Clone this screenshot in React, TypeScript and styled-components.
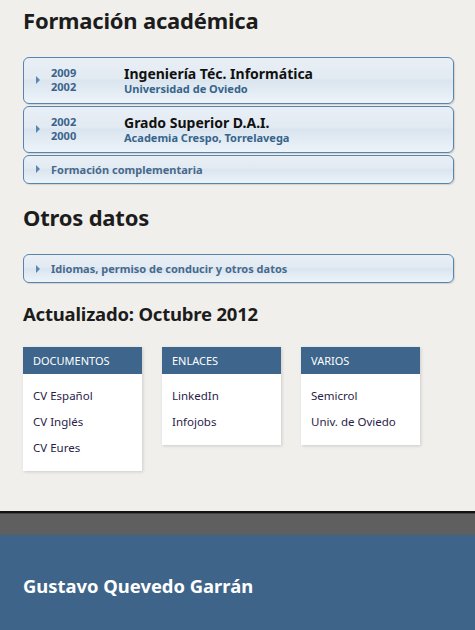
import React from 'react';
import styled, { createGlobalStyle } from 'styled-components';

const GlobalStyle = createGlobalStyle`
  html, body {
    margin: 0;
    padding: 0;
    background: #f0efeb;
    font-family: "Noto Sans", "Open Sans", "DejaVu Sans", sans-serif;
  }
`;

const Page = styled.div`
  display: flex;
  flex-direction: column;
  min-height: 630px;
`;

const Main = styled.main`
  padding: 6px 21px 20px 23px;
  flex: 1;
`;

const Heading = styled.h2<{ $size: number; $mt: number; $mb: number }>`
  margin: ${(p) => p.$mt}px 0 ${(p) => p.$mb}px;
  font-size: ${(p) => p.$size}px;
  font-weight: 700;
  color: #1c1c1c;
  line-height: 1.3;
  letter-spacing: -0.2px;
`;

const List = styled.div`
  display: flex;
  flex-direction: column;
  gap: 2px;
`;

const Item = styled.div<{ $tall?: boolean }>`
  display: flex;
  align-items: center;
  box-sizing: border-box;
  height: ${(p) => (p.$tall ? 47 : 29)}px;
  border: 1px solid #5785b0;
  border-radius: 6px;
  background: linear-gradient(
    to bottom,
    #e9eff5 0%,
    #e2eaf2 45%,
    #dae5ef 50%,
    #edf3f9 100%
  );
  box-shadow: 1px 1px 1px rgba(0, 0, 0, 0.12);
  padding-left: 12px;
`;

const Arrow = styled.span`
  width: 0;
  height: 0;
  border-top: 4px solid transparent;
  border-bottom: 4px solid transparent;
  border-left: 4px solid #5a87b1;
  margin-right: 11px;
  flex: none;
`;

const Years = styled.div`
  display: flex;
  flex-direction: column;
  width: 73px;
  font-size: 11px;
  font-weight: 700;
  line-height: 14px;
  color: #3b638a;
`;

const Info = styled.div`
  display: flex;
  flex-direction: column;
`;

const Title = styled.div`
  font-size: 14px;
  font-weight: 700;
  color: #111;
  line-height: 16px;
`;

const Sub = styled.div`
  font-size: 11px;
  font-weight: 700;
  color: #36648c;
  line-height: 13px;
`;

const Label = styled.span`
  font-size: 11px;
  font-weight: 700;
  color: #48698c;
`;

const Boxes = styled.div`
  display: flex;
  align-items: flex-start;
  gap: 20px;
  margin-top: 21px;
`;

const Box = styled.div`
  width: 119px;
  background: #fff;
  box-shadow: 1px 1px 3px rgba(0, 0, 0, 0.15);
`;

const BoxHead = styled.div`
  height: 27px;
  background: #3e658b;
  color: #fff;
  font-size: 11px;
  line-height: 27px;
  padding-left: 10px;
`;

const BoxBody = styled.div`
  display: flex;
  flex-direction: column;
  gap: 9px;
  padding: 13px 10px 15px;
`;

const BoxLink = styled.a`
  font-size: 11.5px;
  line-height: 17px;
  color: #2a1c48;
  text-decoration: none;
`;

const Footer = styled.footer`
  border-top: 2px solid #111;
`;

const FooterBar = styled.div`
  height: 22px;
  background: #5f5f5f;
  box-shadow: inset 0 1px 0 #444;
`;

const FooterMain = styled.div`
  background: #3e6589;
  height: 95px;
  box-sizing: border-box;
  padding: 6px 0 0 23px;
  display: flex;
  align-items: center;
  color: #fff;
  font-size: 18.4px;
  font-weight: 700;
`;

const degrees = [
  { y1: '2009', y2: '2002', title: 'Ingeniería Téc. Informática', sub: 'Universidad de Oviedo' },
  { y1: '2002', y2: '2000', title: 'Grado Superior D.A.I.', sub: 'Academia Crespo, Torrelavega' },
];

const boxes = [
  { head: 'DOCUMENTOS', links: ['CV Español', 'CV Inglés', 'CV Eures'] },
  { head: 'ENLACES', links: ['LinkedIn', 'Infojobs'] },
  { head: 'VARIOS', links: ['Semicrol', 'Univ. de Oviedo'] },
];

export default function App() {
  return (
    <Page>
      <GlobalStyle />
      <Main>
        <Heading $size={22} $mt={0} $mb={22}>Formación académica</Heading>
        <List>
          {degrees.map((d) => (
            <Item $tall key={d.title}>
              <Arrow />
              <Years>
                <span>{d.y1}</span>
                <span>{d.y2}</span>
              </Years>
              <Info>
                <Title>{d.title}</Title>
                <Sub>{d.sub}</Sub>
              </Info>
            </Item>
          ))}
          <Item>
            <Arrow />
            <Label>Formación complementaria</Label>
          </Item>
        </List>
        <Heading $size={22} $mt={19} $mb={23}>Otros datos</Heading>
        <Item>
          <Arrow />
          <Label>Idiomas, permiso de conducir y otros datos</Label>
        </Item>
        <Heading $size={18.5} $mt={19} $mb={0}>Actualizado: Octubre 2012</Heading>
        <Boxes>
          {boxes.map((b) => (
            <Box key={b.head}>
              <BoxHead>{b.head}</BoxHead>
              <BoxBody>
                {b.links.map((l) => (
                  <BoxLink key={l} href="#">{l}</BoxLink>
                ))}
              </BoxBody>
            </Box>
          ))}
        </Boxes>
      </Main>
      <Footer>
        <FooterBar />
        <FooterMain>Gustavo Quevedo Garrán</FooterMain>
      </Footer>
    </Page>
  );
}
